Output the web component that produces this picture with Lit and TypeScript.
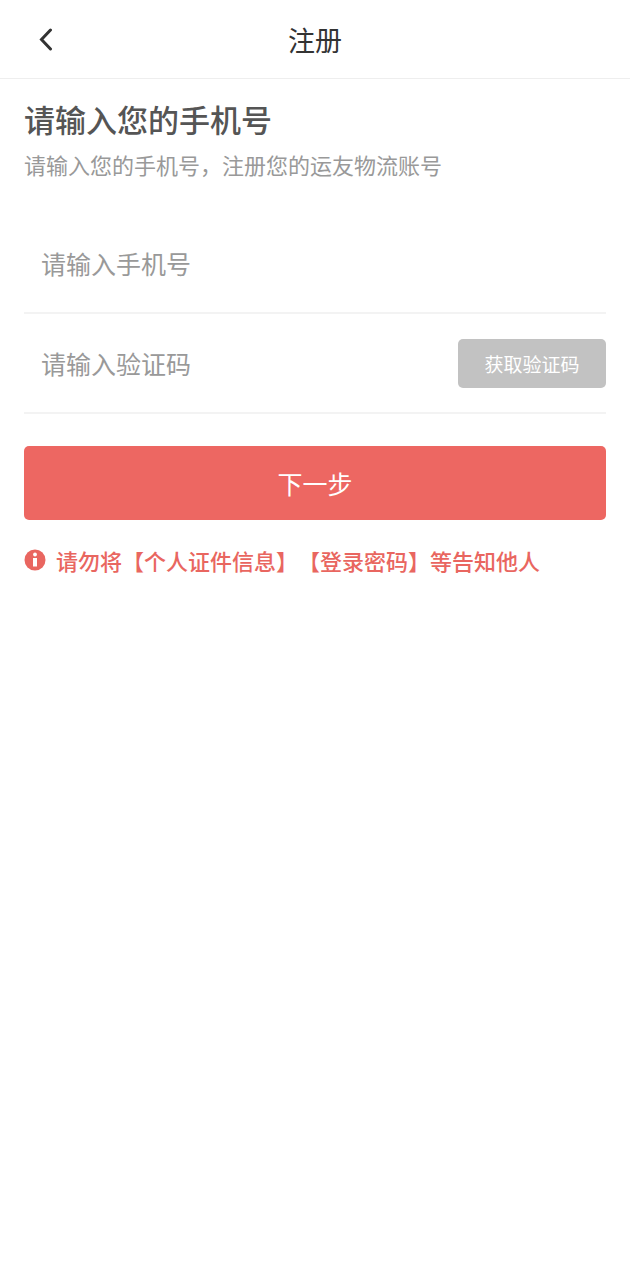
import { LitElement, html, css } from "lit";
import { customElement } from "lit/decorators.js";

@customElement("app-root")
export class AppRoot extends LitElement {
  static styles = css`
    :host {
      display: block;
      min-height: 100vh;
      background: #fff;
      color: #333;
      font-family: "Noto Sans CJK SC", sans-serif;
    }
    * {
      box-sizing: border-box;
    }
    button,
    input {
      font-family: inherit;
      border: 0;
      margin: 0;
      padding: 0;
    }
    .bar {
      display: grid;
      grid-template-columns: 44px 1fr 44px;
      align-items: center;
      height: 79px;
      padding: 0 24px;
      border-bottom: 1px solid #eee;
    }
    .back {
      display: flex;
      align-items: center;
      justify-content: center;
      height: 44px;
      background: none;
    }
    .bar h1 {
      margin: 0;
      padding-top: 2px;
      text-align: center;
      font-size: 27px;
      line-height: 40px;
      font-weight: 400;
    }
    main {
      padding: 16px 24px;
    }
    h2 {
      margin: 0;
      font-size: 31px;
      line-height: 47px;
      font-weight: 500;
      color: #555;
    }
    .sub {
      margin: 0 0 28px;
      padding: 6px 0;
      font-size: 22px;
      line-height: 32px;
      color: #999;
    }
    .field {
      display: flex;
      align-items: center;
      height: 100px;
      border-bottom: 2px solid #f3f3f3;
    }
    .field input {
      flex: 1;
      min-width: 0;
      height: 64px;
      padding: 0 17px;
      font-size: 25px;
      color: #333;
      background: none;
      outline: none;
    }
    .field input::placeholder {
      color: #999;
      opacity: 1;
    }
    .code {
      width: 148px;
      height: 49px;
      border-radius: 5px;
      background: #c2c2c2;
      color: #fff;
      font-size: 19px;
    }
    .next {
      display: block;
      width: 100%;
      height: 74px;
      margin: 32px 0 24px;
      border-radius: 5px;
      background: #ed6762;
      color: #fff;
      font-size: 25px;
    }
    .tip {
      display: flex;
      align-items: center;
      gap: 10px;
      margin: 0;
      font-size: 22px;
      line-height: 32px;
      font-weight: 500;
      color: #e96660;
      text-spacing-trim: space-all;
    }
    .tip svg {
      flex: none;
    }
  `;

  render() {
    return html`
      <header class="bar">
        <button class="back" type="button" aria-label="返回">
          <svg
            width="16"
            height="24"
            viewBox="0 0 16 24"
            fill="none"
            stroke="#333"
            stroke-width="3"
            stroke-linecap="round"
          >
            <path d="M12.500 3 3.500 12.500 12.500 22" />
          </svg>
        </button>
        <h1>注册</h1>
      </header>
      <main>
        <h2>请输入您的手机号</h2>
        <p class="sub">请输入您的手机号，注册您的运友物流账号</p>
        <form>
          <div class="field">
            <input type="tel" aria-label="手机号" placeholder="请输入手机号" />
          </div>
          <div class="field">
            <input type="text" aria-label="验证码" placeholder="请输入验证码" />
            <button class="code" type="button">获取验证码</button>
          </div>
          <button class="next" type="button">下一步</button>
        </form>
        <p class="tip">
          <svg width="22" height="22" viewBox="0 0 22 22" aria-hidden="true">
            <circle cx="11" cy="11" r="10.500" fill="#e96660" />
            <circle cx="11" cy="5.500" r="1.900" fill="#fff" />
            <path d="M9 9h4v8.500H9z" fill="#fff" />
          </svg>
          <span>请勿将【个人证件信息】【登录密码】等告知他人</span>
        </p>
      </main>
    `;
  }
}
